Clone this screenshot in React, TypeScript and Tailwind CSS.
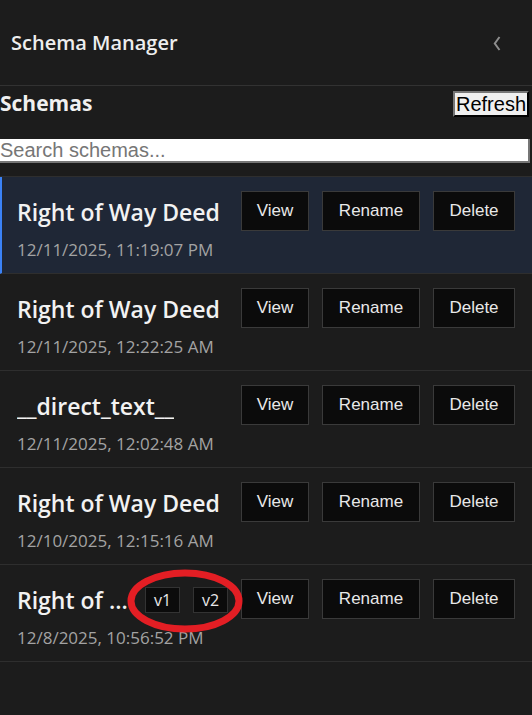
import React from 'react';

interface Schema {
    id: string;
    name: string;
    date: string;
    versions?: string[];
    selected?: boolean;
}

const schemas: Schema[] = [
    { id: '1', name: 'Right of Way Deed', date: '12/11/2025, 11:19:07 PM', selected: true },
    { id: '2', name: 'Right of Way Deed', date: '12/11/2025, 12:22:25 AM' },
    { id: '3', name: '__direct_text__', date: '12/11/2025, 12:02:48 AM' },
    { id: '4', name: 'Right of Way Deed', date: '12/10/2025, 12:15:16 AM' },
    { id: '5', name: 'Right of Way Deed', date: '12/8/2025, 10:56:52 PM', versions: ['v1', 'v2'] },
];

const uiFont = "font-['Open_Sans','Noto_Sans',sans-serif]";
const btnFont = "font-['Liberation_Sans',Arial,sans-serif]";

const ActionButton: React.FC<{ label: string; width: string }> = ({ label, width }) => (
    <button className={`h-[40px] ${width} bg-[#0b0b0b] border border-[#3a3a3a] text-[#e8e8e8] text-[17px] ${btnFont}`}>
        {label}
    </button>
);

const App: React.FC = () => {
    return (
        <div className={`relative w-[532px] min-h-[715px] bg-[#1c1c1c] ${uiFont}`}>
            <div className="h-[86px] flex items-center justify-between pl-[11px] pr-[31px] border-b border-[#323232]">
                <h1 className="text-[20px] font-semibold text-[#eeeeee]">Schema Manager</h1>
                <svg width="8" height="15" viewBox="0 0 8 15" className="mt-[2px]">
                    <path d="M6.5 1 L1.8 7.5 L6.5 14" fill="none" stroke="#8d8d8d" strokeWidth="2" />
                </svg>
            </div>

            <div className="flex items-center justify-between h-[26px] mt-[5px] pr-[3px]">
                <h2 className="text-[21px] font-bold text-[#f0f0f0]">Schemas</h2>
                <button className={`h-[26px] px-[1px] bg-[#efefef] text-black text-[20px] leading-none border-2 border-t-[#767676] border-l-[#767676] border-r-black border-b-black ${btnFont}`}>
                    Refresh
                </button>
            </div>

            <input
                placeholder="Search schemas..."
                className={`mt-[22px] block w-[530px] h-[24px] bg-white text-[20px] text-black placeholder:text-[#767676] border-2 border-t-0 border-l-0 border-b-[#767676] border-r-[#767676] outline-none ${btnFont}`}
            />

            <ul className="mt-[13px] border-t border-[#2e2e2e]">
                {schemas.map(s => (
                    <li
                        key={s.id}
                        className={`flex items-start gap-[13px] pr-[17px] pt-[14px] pb-[12px] border-b border-[#2e2e2e] ${s.selected ? 'bg-[#1f2736] border-l-2 border-l-[#3b82f6] pl-[15px]' : 'pl-[17px]'}`}
                    >
                        <div className="flex-1 min-w-0 pt-[6px]">
                            <div className="flex items-center h-[30px]">
                                <span className="truncate min-w-0 text-[23px] leading-[30px] font-semibold text-[#f2f2f2]">{s.name}</span>
                                {s.versions && (
                                    <div className="flex gap-[13px] ml-[12px] shrink-0">
                                        {s.versions.map(v => (
                                            <span key={v} className="w-[35px] h-[26px] flex items-center justify-center bg-[#0b0b0b] border border-[#333] text-[16px] text-[#e8e8e8]">
                                                {v}
                                            </span>
                                        ))}
                                    </div>
                                )}
                            </div>
                            <p className="mt-[12px] h-[22px] text-[17px] leading-[22px] text-[#a3a3a3] whitespace-nowrap">{s.date}</p>
                        </div>
                        <div className="flex gap-[13px] shrink-0">
                            <ActionButton label="View" width="w-[68px]" />
                            <ActionButton label="Rename" width="w-[98px]" />
                            <ActionButton label="Delete" width="w-[82px]" />
                        </div>
                    </li>
                ))}
            </ul>

            <svg className="absolute left-[126px] top-[568px] pointer-events-none" width="118" height="66" viewBox="0 0 118 66">
                <ellipse cx="59" cy="33" rx="54" ry="28" fill="none" stroke="#e31e24" strokeWidth="7" />
            </svg>
        </div>
    );
};

export default App;
